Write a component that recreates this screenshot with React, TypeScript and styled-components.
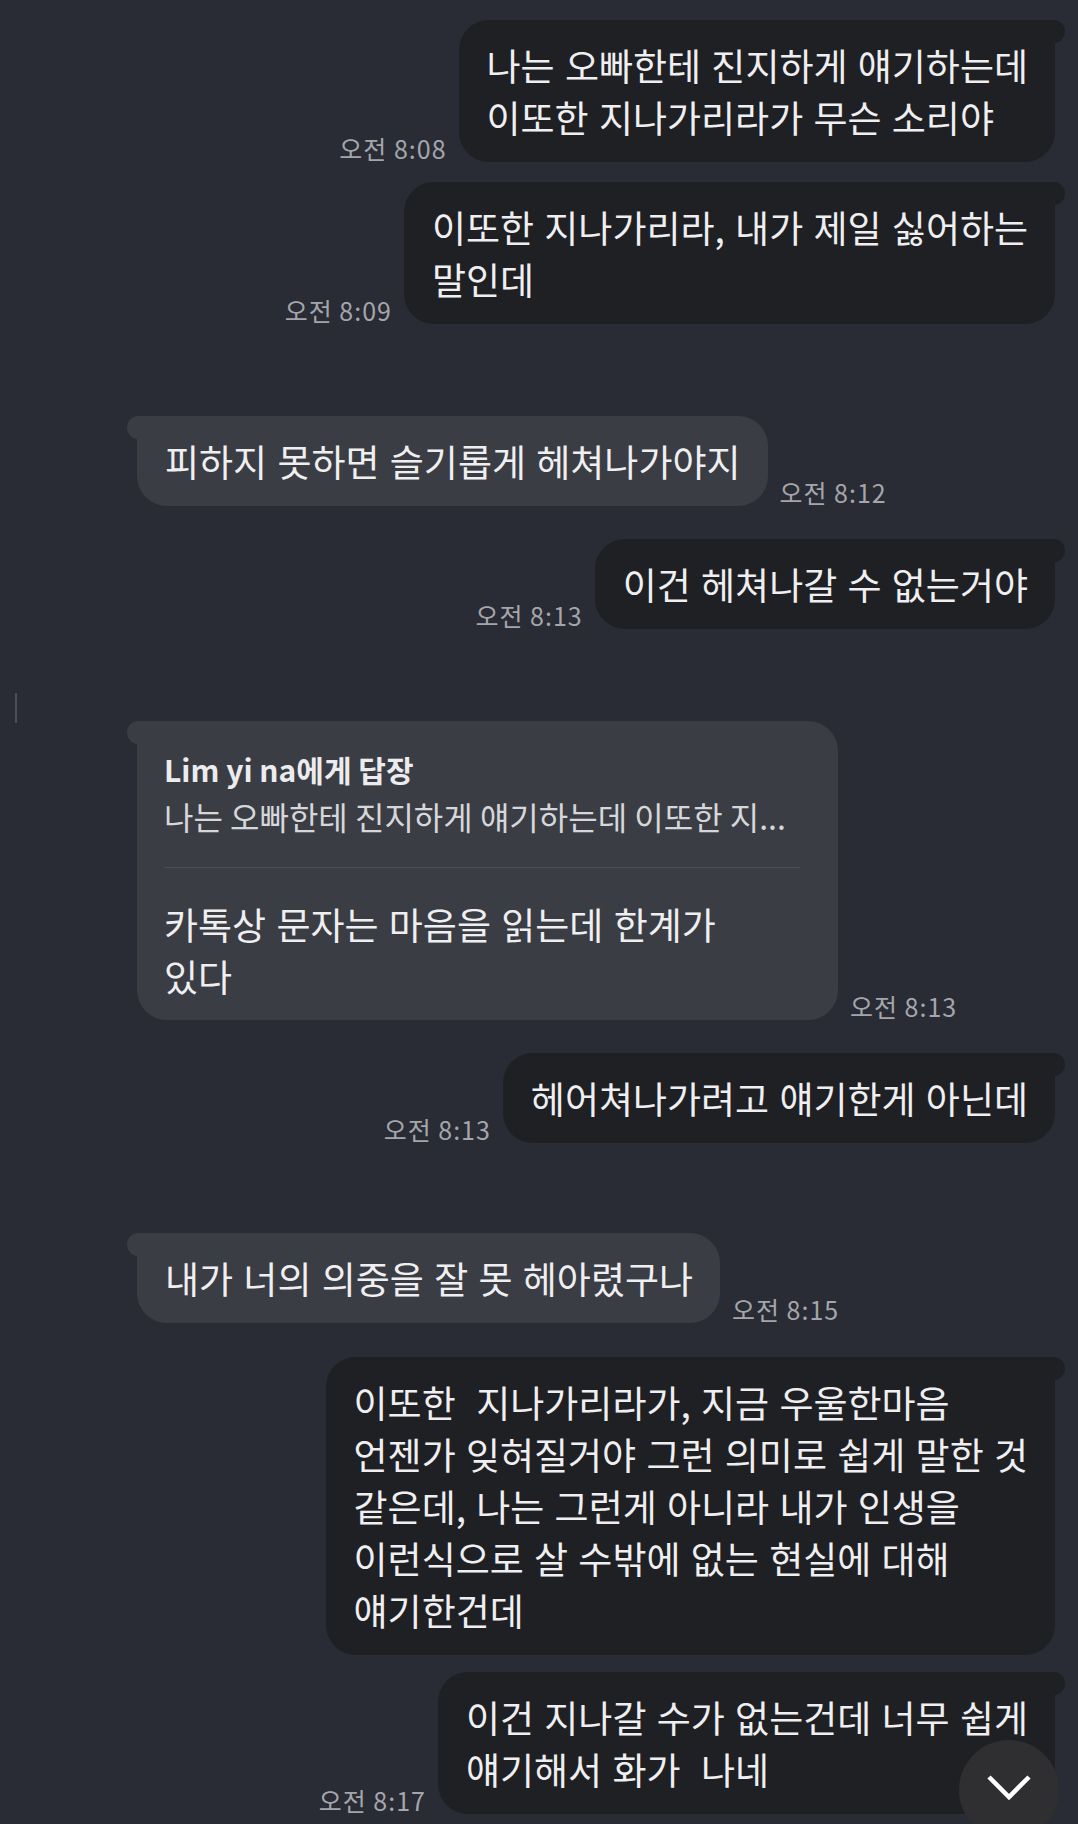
import React from 'react';
import styled, { createGlobalStyle, css } from 'styled-components';

type Side = 'me' | 'them';

interface IMessage {
  side: Side;
  lines: string[];
  time?: string;
  gap: number;
  reply?: { to: string; quote: string };
}

const GlobalStyle = createGlobalStyle`
  html, body {
    margin: 0;
    padding: 0;
    background: #292c34;
  }
  * {
    box-sizing: border-box;
  }
`;

const Screen = styled.div`
  position: relative;
  width: 1078px;
  height: 1824px;
  overflow: hidden;
  background: #292c34;
  font-family: 'Noto Sans CJK KR', 'Noto Sans', sans-serif;
`;

const Thread = styled.div`
  display: flex;
  flex-direction: column;
  padding: 20px 23px 0 0;
`;

const Row = styled.div<{ $side: Side; $gap: number }>`
  display: flex;
  align-items: flex-end;
  gap: 12px;
  margin-top: ${({ $gap }) => $gap}px;
  justify-content: ${({ $side }) => ($side === 'me' ? 'flex-end' : 'flex-start')};
  padding-left: ${({ $side }) => ($side === 'me' ? '0' : '137px')};
`;

const tail = css<{ $side: Side }>`
  &::after {
    content: '';
    position: absolute;
    top: 0;
    width: 24px;
    height: 23px;
    background: inherit;
    ${({ $side }) =>
      $side === 'me'
        ? 'right: -10px; border-radius: 0 12px 12px 0;'
        : 'left: -10px; border-radius: 12px 0 0 12px;'}
  }
`;

const Bubble = styled.div<{ $side: Side }>`
  position: relative;
  padding: 19px 27px 19px 28px;
  border-radius: ${({ $side }) => ($side === 'me' ? '30px 6px 30px 30px' : '6px 30px 30px 30px')};
  background: ${({ $side }) => ($side === 'me' ? '#1f2024' : '#3b3d44')};
  color: #efeff1;
  font-size: 37px;
  line-height: 52px;
  word-spacing: 2px;
  white-space: pre;
  ${tail}
`;

const ReplyBubble = styled(Bubble)`
  width: 701px;
  padding: 30px 38px 18px 27px;
`;

const ReplyTitle = styled.div`
  font-size: 30px;
  font-weight: 700;
  line-height: 36px;
  word-spacing: 0;
  color: #ececee;
`;

const ReplyQuote = styled.div`
  margin-top: 9px;
  font-size: 32px;
  line-height: 40px;
  word-spacing: 0;
  color: #d6d7da;
`;

const Divider = styled.div`
  height: 1px;
  margin: 31px 0 30px;
  background: #4d4f57;
`;

const Line = styled.div``;

const Time = styled.span`
  flex-shrink: 0;
  font-size: 25px;
  line-height: 28px;
  letter-spacing: 1px;
  color: #a4a6ac;
`;

const ScrollThumb = styled.div`
  position: absolute;
  left: 15px;
  top: 693px;
  width: 2px;
  height: 30px;
  background: #4b4e56;
`;

const DownButton = styled.div`
  position: absolute;
  right: 19px;
  bottom: -16px;
  width: 100px;
  height: 100px;
  border-radius: 50%;
  background: #2f2f31;
  display: flex;
  align-items: center;
  justify-content: center;
  padding-bottom: 4px;
`;

const messages: IMessage[] = [
  { side: 'me', gap: 0, time: '오전 8:08', lines: ['나는 오빠한테 진지하게 얘기하는데', '이또한 지나가리라가 무슨 소리야'] },
  { side: 'me', gap: 20, time: '오전 8:09', lines: ['이또한 지나가리라, 내가 제일 싫어하는', '말인데'] },
  { side: 'them', gap: 92, time: '오전 8:12', lines: ['피하지 못하면 슬기롭게 헤쳐나가야지'] },
  { side: 'me', gap: 33, time: '오전 8:13', lines: ['이건 헤쳐나갈 수 없는거야'] },
  {
    side: 'them',
    gap: 92,
    time: '오전 8:13',
    lines: ['카톡상 문자는 마음을 읽는데 한계가', '있다'],
    reply: { to: 'Lim yi na에게 답장', quote: '나는 오빠한테 진지하게 얘기하는데 이또한 지...' },
  },
  { side: 'me', gap: 33, time: '오전 8:13', lines: ['헤어쳐나가려고 얘기한게 아닌데'] },
  { side: 'them', gap: 90, time: '오전 8:15', lines: ['내가 너의 의중을 잘 못 헤아렸구나'] },
  {
    side: 'me',
    gap: 34,
    lines: [
      '이또한  지나가리라가, 지금 우울한마음',
      '언젠가 잊혀질거야 그런 의미로 쉽게 말한 것',
      '같은데, 나는 그런게 아니라 내가 인생을',
      '이런식으로 살 수밖에 없는 현실에 대해',
      '얘기한건데',
    ],
  },
  { side: 'me', gap: 17, time: '오전 8:17', lines: ['이건 지나갈 수가 없는건데 너무 쉽게', '얘기해서 화가  나네'] },
];

function MessageRow({ message }: { message: IMessage }) {
  const { side, lines, time, gap, reply } = message;
  const body = lines.map((text, i) => <Line key={i}>{text}</Line>);
  const bubble = reply ? (
    <ReplyBubble $side={side}>
      <ReplyTitle>{reply.to}</ReplyTitle>
      <ReplyQuote>{reply.quote}</ReplyQuote>
      <Divider />
      {body}
    </ReplyBubble>
  ) : (
    <Bubble $side={side}>{body}</Bubble>
  );

  return (
    <Row $side={side} $gap={gap}>
      {side === 'me' && time && <Time>{time}</Time>}
      {bubble}
      {side === 'them' && time && <Time>{time}</Time>}
    </Row>
  );
}

export default function App() {
  return (
    <Screen>
      <GlobalStyle />
      <Thread>
        {messages.map((m, i) => (
          <MessageRow key={i} message={m} />
        ))}
      </Thread>
      <ScrollThumb />
      <DownButton>
        <svg width="46" height="28" viewBox="0 0 46 28">
          <polyline points="3,3 23,23 43,3" fill="none" stroke="#ffffff" strokeWidth="4.5" strokeLinejoin="miter" />
        </svg>
      </DownButton>
    </Screen>
  );
}
